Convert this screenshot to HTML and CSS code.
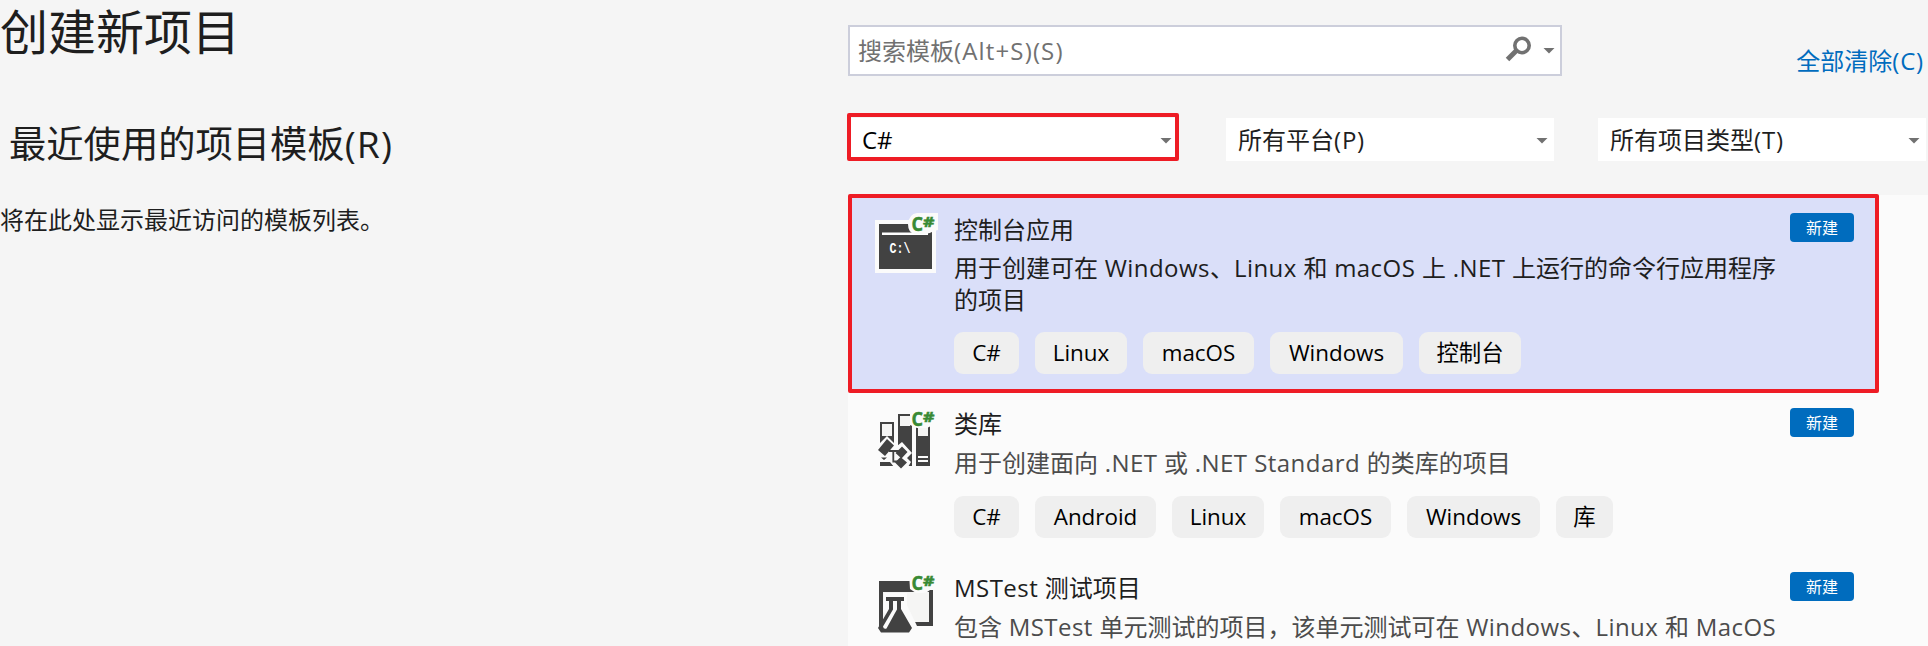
FILE: index.html
```html
<!DOCTYPE html>
<html lang="zh-CN">
<head>
<meta charset="utf-8">
<title>创建新项目</title>
<link rel="stylesheet" href="styles.css">
</head>
<body>
<div class="page">
  <section class="recent">
    <h1 class="page-title">创建新项目</h1>
    <h2 class="recent-title">最近使用的项目模板<span class="key">(R)</span></h2>
    <p class="recent-empty">将在此处显示最近访问的模板列表。</p>
  </section>
  <main class="templates">
    <div class="search-row">
      <div class="search">
        <span class="search-label">搜索模板<span class="key">(Alt+S)(S)</span></span>
        <svg class="search-icon" width="27" height="27" viewBox="0 0 27 27"><circle cx="17" cy="9.5" r="7.2" fill="none" stroke="#717171" stroke-width="3.6"/><path d="M11.5 14.5 2.5 23.5" stroke="#717171" stroke-width="5"/></svg>
        <span class="arrow"></span>
      </div>
      <a class="clear">全部清除<span class="key-sm">(C)</span></a>
    </div>
    <div class="filters">
      <div class="combo combo-marked"><span>C#</span><span class="arrow"></span></div>
      <div class="combo"><span>所有平台<span class="key-sm">(P)</span></span><span class="arrow"></span></div>
      <div class="combo"><span>所有项目类型<span class="key-sm">(T)</span></span><span class="arrow"></span></div>
    </div>
    <div class="list">
      <article class="item item-selected">
        <svg class="item-icon" width="64" height="64" viewBox="0 0 64 64">
          <path d="M0 7H61V60H0Z" fill="#fbfbfb"/><path d="M4 11H57V56H4Z" fill="#424242"/>
          <path d="M7 19.5H53V22H7Z" fill="#fff"/>
          <path d="M42 0H63V17L59 18Q54 21 50 21H40Q33 20 33 11Q34 1 42 0Z" fill="#fbfbfb"/>
          <text class="prompt" x="14.5" y="40" textLength="21" lengthAdjust="spacingAndGlyphs">C:\</text>
          <text class="lang-c" x="36.5" y="18" textLength="11.5" lengthAdjust="spacingAndGlyphs">C</text><text class="lang-s" x="48" y="13.8" textLength="11.5" lengthAdjust="spacingAndGlyphs">#</text>
        </svg>
        <div class="item-body">
          <h3 class="item-title">控制台应用</h3>
          <p class="item-desc">用于创建可在<span class="en"> Windows</span>、<span class="en">Linux </span>和<span class="en"> macOS </span>上<span class="en"> .NET </span>上运行的命令行应用程序<br>的项目</p>
          <div class="tags"><span class="tag w65">C#</span><span class="tag w92">Linux</span><span class="tag w111">macOS</span><span class="tag w133">Windows</span><span class="tag w102">控制台</span></div>
        </div>
        <span class="badge">新建</span>
      </article>
      <article class="item item-short">
        <svg class="item-icon" width="64" height="64" viewBox="0 0 64 64">
          <path d="M5 14H19V58H5ZM23 6H37V58H23ZM41 15H55V58H41Z" fill="#424242"/>
          <path d="M7 16H17V28H7ZM25 8H35V18H25ZM43 17H53V28H43Z" fill="#f5f5f4"/>
          <path d="M43 48H53V50H43ZM43 52H53V54H43Z" fill="#fbfbfb"/>
          <path d="M12 28 22 38 27 34 37 45 32 50 36 54 33 59H19L15 54H5V49L1 44 2 38Z" fill="#fbfbfb"/>
          <path d="M5 54.500H13V58H5ZM6 49.500 9 52 12 49.500Z" fill="#424242"/>
          <path d="M12 31 19 37.500 10 48 3 42ZM27 38.500 32.500 44 26.500 50.500 20.500 45ZM25.500 49 32 54.500 26 60.500 20 54.500Z" fill="#424242"/>
          <path d="M14 43H24M18.300 43V53.500H24" fill="none" stroke="#424242" stroke-width="1.800"/>
          <path d="M42 1H62V15L52 20H42L35 17V6Z" fill="#fbfbfb"/>
          <text class="lang-c" x="36.5" y="18" textLength="11.5" lengthAdjust="spacingAndGlyphs">C</text><text class="lang-s" x="48" y="13.8" textLength="11.5" lengthAdjust="spacingAndGlyphs">#</text>
        </svg>
        <div class="item-body">
          <h3 class="item-title">类库</h3>
          <p class="item-desc">用于创建面向<span class="en"> .NET </span>或<span class="en"> .NET Standard </span>的类库的项目</p>
          <div class="tags"><span class="tag w65">C#</span><span class="tag w121">Android</span><span class="tag w92">Linux</span><span class="tag w111">macOS</span><span class="tag w133">Windows</span><span class="tag w57">库</span></div>
        </div>
        <span class="badge">新建</span>
      </article>
      <article class="item item-short">
        <svg class="item-icon" width="64" height="64" viewBox="0 0 64 64">
          <path d="M4 9H58V54H4Z" fill="#424242"/><path d="M8 20H54V50H8Z" fill="#f5f5f4"/>
          <path d="M9 21H32V33L42 54 37 61 32 55 8 40Z" fill="#fbfbfb"/>
          <path d="M11 25H29V29H26V37L37 56 34 60.500H6L3 56 14 37V29H11Z" fill="#424242"/>
          <path d="M18 29H22V37.500L20 41 11.500 56.500Q8.500 57.500 8 54.500L18 37.500Z" fill="#fbfbfb"/>
          <path d="M34 1H62V18H55Q52 21 48 21H41L35 17Z" fill="#fbfbfb"/>
          <text class="lang-c" x="36.5" y="18" textLength="11.5" lengthAdjust="spacingAndGlyphs">C</text><text class="lang-s" x="48" y="13.8" textLength="11.5" lengthAdjust="spacingAndGlyphs">#</text>
        </svg>
        <div class="item-body">
          <h3 class="item-title"><span class="en">MSTest </span>测试项目</h3>
          <p class="item-desc">包含<span class="en"> MSTest </span>单元测试的项目，该单元测试可在<span class="en"> Windows</span>、<span class="en">Linux </span>和<span class="en"> MacOS</span></p>
        </div>
        <span class="badge">新建</span>
      </article>
    </div>
  </main>
</div>
</body>
</html>
```
FILE: styles.css
```css
* { box-sizing: border-box; }
body { margin: 0; background: #f5f5f5; color: #1e1e1e; font: 24px/32px "Open Sans", "Noto Sans CJK SC", sans-serif; }
h1, h2, h3, p { margin: 0; font-weight: 400; }
.page { display: flex; width: 1928px; height: 646px; overflow: hidden; }
.recent { width: 848px; flex: none; }
.page-title { font-size: 48px; line-height: 64px; }
.recent-title { margin-top: 55px; padding-left: 9px; font-size: 37.3px; line-height: 50px; }
.recent-empty { margin-top: 35px; white-space: nowrap; }
.key { letter-spacing: 1.15px; }
.key-sm { letter-spacing: 0.8px; }
.en { letter-spacing: 0.45px; white-space: pre; }
.templates { width: 1080px; flex: none; display: flex; flex-direction: column; }
.search-row { display: flex; justify-content: space-between; height: 51px; margin-top: 25px; padding-right: 4px; }
.search { display: flex; align-items: center; width: 714px; height: 51px; padding: 0 5px 0 8px; border: 2px solid #cccedb; background: #fff; color: #717171; }
.search-label { flex: 1; }
.search-icon { margin: 0 11px 3px 0; }
.clear { padding-top: 20px; color: #006cbe; }
.arrow { width: 12px; height: 6px; flex: none; background: #717171; clip-path: polygon(0 0, 100% 0, 50% 100%); }
.filters { display: flex; gap: 44px; margin-top: 42px; }
.combo { position: relative; display: flex; align-items: center; justify-content: space-between; width: 328px; height: 43px; padding: 0 6px 0 12px; background: #fff; }
.combo .arrow { margin-top: 2px; }
.combo-marked { margin-right: 6px; padding: 0 4px 0 14px; color: #000; }
.combo-marked::after { content: ""; position: absolute; inset: -5px -3px 0 -1px; border: 4px solid #ee1c25; border-radius: 2px; }
.list { flex: 1; margin-top: 34px; background: #fbfbfb; }
.item { position: relative; display: flex; gap: 15px; width: 1031px; height: 195px; padding: 18px 25px 0 27px; }
.item-short { height: 164px; }
.item-selected { background: #dadff9; }
.item-selected::after { content: ""; position: absolute; inset: -1px 0 -3px 0; border: 4px solid #ee1c25; border-radius: 2px; }
.item-icon { flex: none; overflow: visible; }
.item-body { flex: 1; min-width: 0; padding-top: 1px; white-space: nowrap; }
.item-title { font-size: 24px; }
.item-desc { margin-top: 6px; line-height: 31.5px; color: #4c4c4c; }
.item-selected .item-desc { color: #1e1e1e; }
.item-short .item-title { margin-top: -1px; margin-bottom: 7px; }
.item-short .item-desc { margin-top: 0; }
.tags { display: flex; gap: 16px; margin-top: 17px; color: #000; font-size: 22.4px; }
.tag { height: 42px; line-height: 41px; border-radius: 9px; background: #efefef; text-align: center; }
.w57 { width: 57px; } .w65 { width: 65px; } .w92 { width: 92px; } .w102 { width: 102px; }
.w111 { width: 111px; } .w121 { width: 121px; } .w133 { width: 133px; }
.badge { flex: none; width: 64px; height: 29px; border-radius: 4px; background: #006cbe; color: #fff; font-size: 16px; line-height: 30px; text-align: center; }
.lang-c, .lang-s { fill: #388a34; stroke: #388a34; stroke-width: 0.5; font-weight: 700; font-size: 19.5px; }
.lang-s { font-size: 14px; }
.prompt { fill: #fff; font: 700 14px "Liberation Mono", monospace; }
```
